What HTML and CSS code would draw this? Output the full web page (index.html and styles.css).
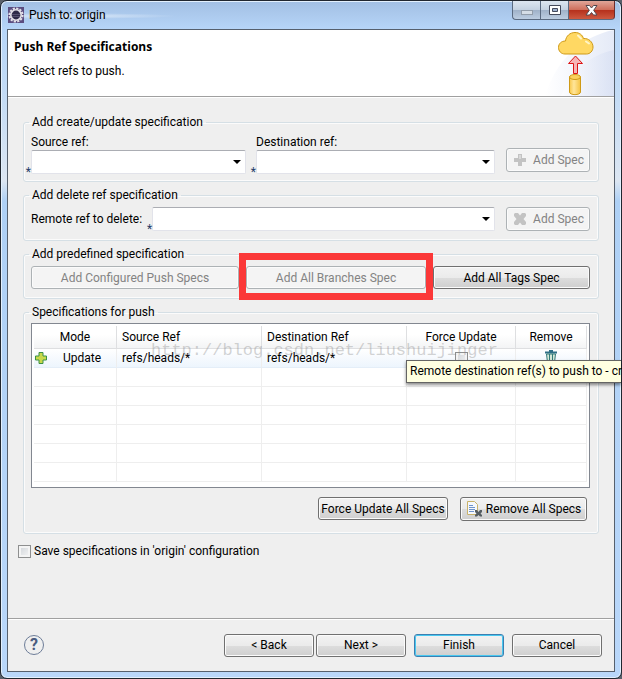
FILE: index.html
```html
<!DOCTYPE html>
<html lang="en">
<head>
<meta charset="utf-8">
<title>Push to: origin</title>
<link rel="stylesheet" href="styles.css">
</head>
<body>
<div class="window">
  <header class="titlebar">
    <svg class="app-icon" width="16" height="16" viewBox="0 0 16 16" aria-hidden="true">
      <rect width="16" height="16" fill="#5b4d80"/>
      <circle cx="8" cy="8" r="6.600" fill="none" stroke="#e4e2e8" stroke-width="2" stroke-dasharray="2.2 1.25"/>
      <circle cx="8" cy="8" r="5.200" fill="#2e2a48" stroke="#e4e2e8" stroke-width="1.600"/>
      <path d="M4 7.500h8M4 9.500h8" stroke="#55506f" stroke-width="1"/>
    </svg>
    <h1 class="window-title">Push to: origin</h1>
    <div class="window-controls">
      <button class="wc wc-min" type="button" aria-label="Minimize" disabled>
        <svg width="12" height="12" viewBox="0 0 12 12"><rect x=".5" y="6.500" width="11" height="4" fill="#d5dde6" stroke="#929daa"/></svg>
      </button>
      <button class="wc wc-max" type="button" aria-label="Maximize">
        <svg width="12" height="10" viewBox="0 0 12 10"><path d="M.5.5h11v9H.5z" fill="#fff" stroke="#454b5c"/><path d="M3.500 3.500h5v3h-5z" fill="#9fb2cf" stroke="#454b5c"/></svg>
      </button>
      <button class="wc wc-close" type="button" aria-label="Close">
        <svg width="13" height="11" viewBox="0 0 13 11"><path d="M1 .5h3.500l2 2.500 2-2.500H12L8.700 5.300 12 10H8.500l-2-2.500-2 2.500H1l3.300-4.700z" fill="#fff" stroke="#53494f"/></svg>
      </button>
    </div>
  </header>

  <main class="client">
    <section class="banner">
      <div class="banner-text">
        <h2>Push Ref Specifications</h2>
        <p>Select refs to push.</p>
      </div>
      <svg class="banner-art" width="75" height="66" viewBox="0 0 75 66" aria-hidden="true">
        <defs>
          <linearGradient id="fade" x1="0" x2="1"><stop offset="0" stop-color="#fff"/><stop offset="1" stop-color="#d3dcf2"/></linearGradient>
          <linearGradient id="tube" x1="0" x2="1"><stop offset="0" stop-color="#f8c84c"/><stop offset=".4" stop-color="#ffe59a"/><stop offset="1" stop-color="#f5c342"/></linearGradient>
        </defs>
        <path d="M6 66C16 32 42 6 75 0v66z" fill="url(#fade)" opacity=".6"/>
        <path d="M22 66C32 42 50 25 75 20v46z" fill="url(#fade)" opacity=".6"/>
        <path d="M26 24c-4 0-6.500-3-6.500-6.500 0-4 3-6.500 7-6.500C27 6 31 2.500 36 2.500c4.500 0 7.500 2.500 8.500 6 5-.5 9.500 3.500 9.500 8.500 0 4-3 7-6.500 7z" fill="#ffd863" stroke="#cf9a17"/>
        <path d="M39 5.500l3 3M47 11.500l3 2" stroke="#fff5c8" stroke-width="2" stroke-linecap="round"/>
        <path d="M36.500 26l7 7.500h-5v10h-4v-10h-5z" fill="#f7b5b5" stroke="#dc1414"/>
        <path d="M30.500 47v15c0 3.500 11 3.500 11 0V47z" fill="url(#tube)" stroke="#cf9a17"/>
        <ellipse cx="36" cy="47" rx="5.500" ry="2.500" fill="#fbd05c" stroke="#cf9a17"/>
      </svg>
    </section>

    <form class="page" onsubmit="return false">
      <fieldset class="group group-create">
        <legend>Add create/update specification</legend>
        <div class="create-row">
          <div class="field source">
            <label for="source">Source ref:</label>
            <div class="combo"><span class="hint">*</span><select id="source"><option></option></select></div>
          </div>
          <div class="field destination">
            <label for="destination">Destination ref:</label>
            <div class="combo"><span class="hint">*</span><select id="destination"><option></option></select></div>
          </div>
          <button class="btn btn-spec" type="button" disabled>
            <svg width="16" height="16" viewBox="0 0 16 16" aria-hidden="true"><path d="M6 2h4v4h4v4h-4v4H6v-4H2V6h4z" fill="#c3c3c3"/><path d="M7.500 3v4h1V3z" fill="#f0f0f0"/></svg>
            Add Spec
          </button>
        </div>
      </fieldset>

      <fieldset class="group group-delete">
        <legend>Add delete ref specification</legend>
        <div class="delete-row">
          <label for="remote">Remote ref to delete:</label>
          <div class="combo"><span class="hint">*</span><select id="remote"><option></option></select></div>
          <button class="btn btn-spec" type="button" disabled>
            <svg width="16" height="16" viewBox="0 0 16 16" aria-hidden="true"><path d="M3 2h3l2 2.500L10 2h3l1 1v2l-2.500 3L14 11v2l-1 1h-3l-2-2.500L6 14H3l-1-1v-2l2.500-3L2 5V3z" fill="#c3c3c3"/></svg>
            Add Spec
          </button>
        </div>
      </fieldset>

      <fieldset class="group group-predefined">
        <legend>Add predefined specification</legend>
        <div class="predefined-row">
          <button class="btn" type="button" disabled>Add Configured Push Specs</button>
          <div class="marked"><button class="btn" type="button" disabled>Add All Branches Spec</button></div>
          <button class="btn" type="button">Add All Tags Spec</button>
        </div>
      </fieldset>

      <fieldset class="group group-specs">
        <legend>Specifications for push</legend>
        <div class="table-box">
          <table>
            <colgroup><col class="c-mode"><col class="c-ref"><col class="c-ref"><col class="c-force"><col class="c-remove"></colgroup>
            <thead>
              <tr><th class="center">Mode</th><th>Source Ref</th><th>Destination Ref</th><th class="center">Force Update</th><th class="center">Remove</th></tr>
            </thead>
            <tbody>
              <tr class="selected">
                <td class="mode-cell"><span class="mode"><svg width="14" height="14" viewBox="0 0 14 14" aria-hidden="true"><path d="M5 1.500h4V5h3.500v4H9v3.500H5V9H1.500V5H5z" fill="#c8d84a" stroke="#3c9246"/></svg>Update</span></td>
                <td>refs/heads/*</td>
                <td>refs/heads/*</td>
                <td class="center"><input type="checkbox" aria-label="Force update"></td>
                <td class="center"><svg class="trash" width="12" height="13" viewBox="0 0 12 13" aria-hidden="true"><path d="M0 2.500h12M4 1h4" stroke="#2f6f86" stroke-width="2"/><path d="M1.500 4h9l-1 8.500h-7z" fill="#d5e8d8" stroke="#337a78"/><path d="M4.500 4v8M7.500 4v8" stroke="#337a78"/></svg></td>
              </tr>
              <tr><td></td><td></td><td></td><td></td><td></td></tr>
              <tr><td></td><td></td><td></td><td></td><td></td></tr>
              <tr><td></td><td></td><td></td><td></td><td></td></tr>
              <tr><td></td><td></td><td></td><td></td><td></td></tr>
              <tr><td></td><td></td><td></td><td></td><td></td></tr>
              <tr><td></td><td></td><td></td><td></td><td></td></tr>
            </tbody>
          </table>
          <span class="watermark">http://blog.csdn.net/liushuijinger</span>
          <div class="tooltip" role="tooltip">Remote destination ref(s) to push to - cr</div>
        </div>
        <div class="spec-actions">
          <button class="btn" type="button">Force Update All Specs</button>
          <button class="btn btn-remove" type="button">
            <svg width="16" height="16" viewBox="0 0 16 16" aria-hidden="true"><path d="M1.500.5h7l3 3v10h-10z" fill="#f5f8fd" stroke="#c9b26a"/><path d="M3 4.500h4M3 6.500h6M3 8.500h6M3 10.500h5" stroke="#6f94cd"/><path d="M9 9h2l1.500 2L14 9h2v2l-1.500 1.500L16 14v1.500h-2L12.500 14 11 15.500H9V14l1.500-1.500L9 11z" fill="#555d62"/></svg>
            Remove All Specs
          </button>
        </div>
      </fieldset>

      <label class="save"><input type="checkbox">Save specifications in 'origin' configuration</label>
    </form>

    <footer class="footer">
      <button class="help" type="button" aria-label="Help">?</button>
      <button class="btn" type="button">&lt; Back</button>
      <button class="btn" type="button">Next &gt;</button>
      <button class="btn btn-default" type="button">Finish</button>
      <button class="btn" type="button">Cancel</button>
    </footer>
  </main>
</div>
</body>
</html>
```
FILE: styles.css
```css
* { box-sizing: border-box; }

body {
  margin: 0;
  background: #59606a;
  font: 12px/16px Roboto, "Noto Sans", sans-serif;
  color: #000;
}

h1, h2, p { margin: 0; font-size: inherit; }
button, select, input { font: inherit; color: inherit; margin: 0; }

.window {
  display: flex;
  flex-direction: column;
  height: 100vh;
  padding: 0 6px 6px;
  border: 1px solid #20262f;
  border-radius: 7px;
  background: linear-gradient(#a2bfe3, #b6d5f8 28px, #c5dcf5 100px, #dce6f2 180px, #aed0f5 200px, #b9d7fa);
  box-shadow: inset 0 0 0 1px #e3f0fd;
}

.titlebar {
  display: flex;
  height: 28px;
  padding-left: 1px;
  background: radial-gradient(ellipse at 60px 15px, rgba(255, 255, 255, .6), transparent 110px);
}

.app-icon { margin-top: 6px; }
.window-title { flex: 1; margin: 6px 0 0 5px; font-weight: 400; }

.window-controls { display: flex; height: 19px; }

.wc {
  display: grid;
  place-items: center;
  width: 28px;
  padding: 0;
  border: 1px solid #5a6a80;
  border-top: 0;
  border-right: 0;
  background: linear-gradient(#dde6f0, #c5d2e1 48%, #9fb1c8 50%, #bccde1);
}
.wc-min { border-bottom-left-radius: 4px; }
.wc-close {
  width: 47px;
  border-right: 1px solid #6d2b2b;
  border-bottom-right-radius: 4px;
  background: linear-gradient(#e0a699, #cf6f5c 48%, #b52f1b 50%, #cd5940);
}

.client {
  display: flex;
  flex: 1;
  flex-direction: column;
  border: 1px solid #56606d;
  background: #efefef;
}

.banner {
  display: flex;
  justify-content: space-between;
  height: 67px;
  border-bottom: 1px solid #a0a0a0;
  background: #fff;
  box-shadow: 0 1px #fff;
}
.banner-text { padding: 9px 6px; }
.banner-text h2 { font-family: "Open Sans", sans-serif; }
.banner-text p { margin: 8px 8px 0; }

.page {
  flex: 1;
  padding: 17px 15px 0;
}

.group {
  margin: 0 0 5px;
  min-width: 0;
  padding: 0 8px 0 7px;
  border: 1px solid #d5dfe5;
  border-radius: 3px;
  box-shadow: inset 0 0 0 1px #fbfbfb;
}
.group legend { margin-left: -2px; padding: 0 3px; }

.group-create { height: 68px; }
.group-delete { height: 54px; }
.group-predefined { height: 53px; }
.group-specs { height: 230px; }

.create-row, .delete-row { display: flex; margin-top: 4px; }
.create-row { align-items: flex-end; }
.delete-row { align-items: center; }

.field { display: flex; flex-direction: column; }
.source { flex: 215; margin-right: 10px; }
.destination { flex: 239; }

.combo { position: relative; display: flex; }
.delete-row .combo { flex: 1; margin-left: 10px; }
.hint {
  position: absolute;
  right: 100%;
  bottom: -4px;
  line-height: 12px;
  color: #1f3c68;
}

select {
  width: 100%;
  height: 24px;
  border: 1px solid #e2e3ea;
  border-top-color: #abadb3;
  border-radius: 2px;
  appearance: none;
  background: #fff url("data:image/svg+xml,%3Csvg xmlns='http://www.w3.org/2000/svg' width='8' height='4'%3E%3Cpath d='M0 0h8L4 4z'/%3E%3C/svg%3E") no-repeat right 4px center;
}

.btn {
  display: flex;
  align-items: center;
  justify-content: center;
  height: 23px;
  padding: 0;
  border: 1px solid #707070;
  border-radius: 3px;
  background: linear-gradient(#f2f2f2, #ebebeb 50%, #dddddd 51%, #cfcfcf);
  box-shadow: inset 0 0 0 1px #fbfbfb;
  white-space: nowrap;
}
.btn:disabled {
  border-color: #adb2b5;
  background: #f4f4f4;
  color: #838383;
}
.btn-spec { gap: 5px; width: 84px; height: 24px; margin-left: 11px; }
.create-row .btn-spec { margin-bottom: 2px; }
.btn-default { border-color: #3c7fb1; box-shadow: inset 0 0 0 1px #48c8f0; }

.predefined-row {
  display: grid;
  grid-template-columns: 208fr 180fr 157fr;
  gap: 7px;
  margin-top: 4px;
}
.marked { position: relative; }
.marked .btn { width: 100%; }
.marked::after {
  content: "";
  position: absolute;
  inset: -13px -7px -11px;
  border: 7px solid #fb3838;
}

.table-box {
  position: relative;
  height: 165px;
  margin-top: 3px;
  padding: 2px;
  border: 1px solid #828790;
  background: #fff;
}
table { width: 100%; table-layout: fixed; border-collapse: separate; border-spacing: 0; }
.c-mode { width: 83px; }
.c-ref { width: 145px; }
.c-force { width: 109px; }
th, td { height: 19px; padding: 0 5px; border: 1px solid #eeeeee; border-width: 0 1px 1px 0; text-align: left; font-weight: 400; }
th { height: 23px; border-color: #dedfe1; background: linear-gradient(#fff 40%, #f3f4f5); }
.center { text-align: center; }
.mode-cell { padding: 0; }
.mode { display: flex; align-items: center; gap: 15px; }
.selected td { background: linear-gradient(#fff, #edf5fd); border-bottom-color: #e4eef8; }

.watermark {
  position: absolute;
  left: 119px;
  top: 17px;
  font: 17px/20px "Liberation Mono", monospace;
  color: rgba(130, 130, 130, .35);
}
.tooltip {
  position: absolute;
  left: 374px;
  right: -32px;
  top: 36px;
  height: 23px;
  padding: 2px 0 2px 3px;
  border: 1px solid #646464;
  border-right: 0;
  background: #ffffe1;
  box-shadow: 0 2px 3px rgba(0, 0, 0, .45);
  white-space: nowrap;
}

.spec-actions { display: flex; justify-content: flex-end; gap: 12px; margin: 9px 3px 0 0; }
.spec-actions .btn { width: 130px; }
.spec-actions .btn-remove { width: 127px; height: 24px; gap: 4px; }

input[type="checkbox"] {
  width: 13px;
  height: 13px;
  border: 1px solid #8e8f8f;
  appearance: none;
  background: linear-gradient(135deg, #cfd3d8, #f6f6f6);
  box-shadow: inset 0 0 0 2px #f4f4f4;
  vertical-align: middle;
}
.save { display: inline-flex; align-items: center; gap: 3px; margin: 4px 0 0 -5px; }

.footer {
  display: flex;
  align-items: center;
  height: 53px;
  padding: 0 12px 0 16px;
  border-top: 1px solid #a0a0a0;
  box-shadow: inset 0 1px #fff;
}
.footer .btn { width: 90px; margin-left: 2px; }
.footer .btn:nth-of-type(n+4) { margin-left: 8px; }
.help {
  width: 20px;
  height: 20px;
  margin-right: auto;
  padding: 0;
  border: 1px solid #6d7d98;
  border-radius: 50%;
  background: none;
  color: #4a5c80;
  font-size: 16px;
  font-weight: 700;
  line-height: 18px;
}
```
